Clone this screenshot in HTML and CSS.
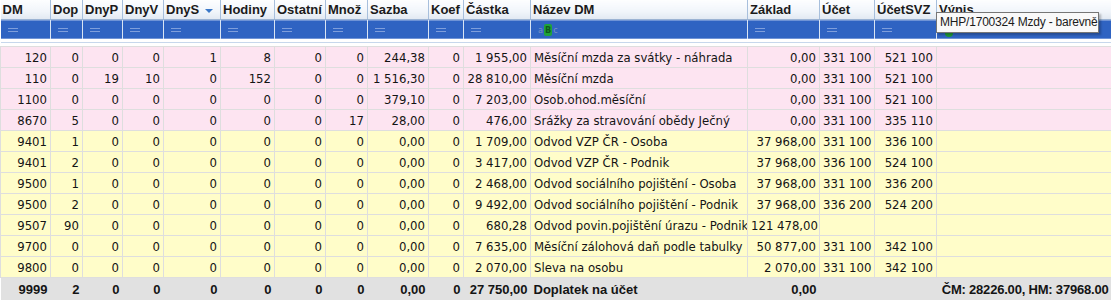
FILE: index.html
```html
<!DOCTYPE html>
<html lang="cs">

<head>
    <meta charset="UTF-8">
    <meta name="viewport" content="width=device-width, initial-scale=1.0">
    <title>Mzdy - barevně</title>
    <link rel="stylesheet" href="styles.css">
</head>

<body>
    <div class="wrap">
        <table class="grid">
            <colgroup>
                <col class="w50"><col class="w32"><col class="w40"><col class="w41">
                <col class="w57"><col class="w54"><col class="w51"><col class="w42">
                <col class="w61"><col class="w35"><col class="w67"><col class="w217">
                <col class="w72"><col class="w55"><col class="w62"><col class="w175">
            </colgroup>
            <thead>
                <tr class="head">
                    <th>DM</th><th>Dop</th><th>DnyP</th><th>DnyV</th>
                    <th>DnyS <span class="sort"></span></th><th>Hodiny</th><th>Ostatní</th><th>Množ</th>
                    <th>Sazba</th><th>Koef</th><th>Částka</th><th>Název DM</th>
                    <th>Základ</th><th>Účet</th><th>ÚčetSVZ</th><th>Výnis</th>
                </tr>
                <tr class="filter">
                    <td><span class="eq"></span></td><td><span class="eq"></span></td><td><span class="eq"></span></td><td><span class="eq"></span></td>
                    <td><span class="eq"></span></td><td><span class="eq"></span></td><td><span class="eq"></span></td><td><span class="eq"></span></td>
                    <td><span class="eq"></span></td><td><span class="eq"></span></td><td><span class="eq"></span></td>
                    <td><span class="abc"><span>a</span><b>B</b><span>c</span></span></td>
                    <td><span class="eq"></span></td><td><span class="eq"></span></td><td><span class="eq"></span></td>
                    <td><span class="dot"></span></td>
                </tr>
                <tr class="gap"><td colspan="16"></td></tr>
            </thead>
            <tbody>
                <tr class="pink">
                    <td>120</td><td>0</td><td>0</td><td>0</td><td>1</td><td>8</td><td>0</td><td>0</td>
                    <td>244,38</td><td>0</td><td>1&nbsp;955,00</td><td class="name">Měsíční mzda za svátky - náhrada</td>
                    <td>0,00</td><td>331&nbsp;100</td><td>521&nbsp;100</td><td></td>
                </tr>
                <tr class="pink">
                    <td>110</td><td>0</td><td>19</td><td>10</td><td>0</td><td>152</td><td>0</td><td>0</td>
                    <td>1&nbsp;516,30</td><td>0</td><td>28&nbsp;810,00</td><td class="name">Měsíční mzda</td>
                    <td>0,00</td><td>331&nbsp;100</td><td>521&nbsp;100</td><td></td>
                </tr>
                <tr class="pink">
                    <td>1100</td><td>0</td><td>0</td><td>0</td><td>0</td><td>0</td><td>0</td><td>0</td>
                    <td>379,10</td><td>0</td><td>7&nbsp;203,00</td><td class="name">Osob.ohod.měsíční</td>
                    <td>0,00</td><td>331&nbsp;100</td><td>521&nbsp;100</td><td></td>
                </tr>
                <tr class="pink">
                    <td>8670</td><td>5</td><td>0</td><td>0</td><td>0</td><td>0</td><td>0</td><td>17</td>
                    <td>28,00</td><td>0</td><td>476,00</td><td class="name">Srážky za stravování obědy Ječný</td>
                    <td>0,00</td><td>331&nbsp;100</td><td>335&nbsp;110</td><td></td>
                </tr>
                <tr class="yellow">
                    <td>9401</td><td>1</td><td>0</td><td>0</td><td>0</td><td>0</td><td>0</td><td>0</td>
                    <td>0,00</td><td>0</td><td>1&nbsp;709,00</td><td class="name">Odvod VZP ČR - Osoba</td>
                    <td>37&nbsp;968,00</td><td>331&nbsp;100</td><td>336&nbsp;100</td><td></td>
                </tr>
                <tr class="yellow">
                    <td>9401</td><td>2</td><td>0</td><td>0</td><td>0</td><td>0</td><td>0</td><td>0</td>
                    <td>0,00</td><td>0</td><td>3&nbsp;417,00</td><td class="name">Odvod VZP ČR - Podnik</td>
                    <td>37&nbsp;968,00</td><td>336&nbsp;100</td><td>524&nbsp;100</td><td></td>
                </tr>
                <tr class="yellow">
                    <td>9500</td><td>1</td><td>0</td><td>0</td><td>0</td><td>0</td><td>0</td><td>0</td>
                    <td>0,00</td><td>0</td><td>2&nbsp;468,00</td><td class="name">Odvod sociálního pojištění - Osoba</td>
                    <td>37&nbsp;968,00</td><td>331&nbsp;100</td><td>336&nbsp;200</td><td></td>
                </tr>
                <tr class="yellow">
                    <td>9500</td><td>2</td><td>0</td><td>0</td><td>0</td><td>0</td><td>0</td><td>0</td>
                    <td>0,00</td><td>0</td><td>9&nbsp;492,00</td><td class="name">Odvod sociálního pojištění - Podnik</td>
                    <td>37&nbsp;968,00</td><td>336&nbsp;200</td><td>524&nbsp;200</td><td></td>
                </tr>
                <tr class="yellow">
                    <td>9507</td><td>90</td><td>0</td><td>0</td><td>0</td><td>0</td><td>0</td><td>0</td>
                    <td>0,00</td><td>0</td><td>680,28</td><td class="name">Odvod povin.pojištění úrazu - Podnik</td>
                    <td>121&nbsp;478,00</td><td></td><td></td><td></td>
                </tr>
                <tr class="yellow">
                    <td>9700</td><td>0</td><td>0</td><td>0</td><td>0</td><td>0</td><td>0</td><td>0</td>
                    <td>0,00</td><td>0</td><td>7&nbsp;635,00</td><td class="name">Měsíční zálohová daň podle tabulky</td>
                    <td>50&nbsp;877,00</td><td>331&nbsp;100</td><td>342&nbsp;100</td><td></td>
                </tr>
                <tr class="yellow">
                    <td>9800</td><td>0</td><td>0</td><td>0</td><td>0</td><td>0</td><td>0</td><td>0</td>
                    <td>0,00</td><td>0</td><td>2&nbsp;070,00</td><td class="name">Sleva na osobu</td>
                    <td>2&nbsp;070,00</td><td>331&nbsp;100</td><td>342&nbsp;100</td><td></td>
                </tr>
            </tbody>
            <tfoot>
                <tr class="total">
                    <td>9999</td><td>2</td><td>0</td><td>0</td><td>0</td><td>0</td><td>0</td><td>0</td>
                    <td>0,00</td><td>0</td><td>27&nbsp;750,00</td><td class="name">Doplatek na účet</td>
                    <td>0,00</td><td></td><td></td><td class="sum">ČM: 28226.00, HM: 37968.00</td>
                </tr>
            </tfoot>
        </table>
        <div class="tooltip">MHP/1700324 Mzdy - barevně</div>
    </div>
</body>

</html>
```

FILE: styles.css
```css
body {
    margin: 0;
    background-color: #fff;
    color: #141414;
    font-family: "DejaVu Sans Condensed", "DejaVu Sans", sans-serif;
    font-stretch: condensed;
    font-size: 13px;
}

.wrap {
    position: relative;
    width: 1111px;
    height: 300px;
    overflow: hidden;
}

.grid {
    width: 1111px;
    table-layout: fixed;
    border-collapse: collapse;
}

.grid th,
.grid td {
    padding: 0 3px;
    white-space: nowrap;
    overflow: hidden;
}

/* sirky sloupcu */
.w50 { width: 50px; }
.w32 { width: 32px; }
.w40 { width: 40px; }
.w41 { width: 41px; }
.w57 { width: 57px; }
.w54 { width: 54px; }
.w51 { width: 51px; }
.w42 { width: 42px; }
.w61 { width: 61px; }
.w35 { width: 35px; }
.w67 { width: 67px; }
.w217 { width: 217px; }
.w72 { width: 72px; }
.w55 { width: 55px; }
.w62 { width: 62px; }
.w175 { width: 175px; }

/* hlavicka */
.head th {
    height: 19px;
    padding: 0 0 0 2px;
    text-align: left;
    font-family: "Liberation Sans", Arial, sans-serif;
    font-stretch: normal;
    font-weight: bold;
    color: #1b1b1b;
    background: linear-gradient(#fdfeff, #f1f5fa 60%, #e2e9f2);
    border-right: 1px solid #a7bfdc;
    border-bottom: 1px solid #9bb3d3;
}

.sort {
    display: inline-block;
    margin-left: 2px;
    vertical-align: middle;
    border-left: 4px solid transparent;
    border-right: 4px solid transparent;
    border-top: 4px solid #3b78c8;
}

/* filtr */
.filter td {
    height: 19px;
    padding: 0 0 0 7px;
    background-color: #2f63c2;
    border-right: 1px solid #d9e4f3;
    box-shadow: inset 0 2px 0 -1px #6f93d6, inset 0 -2px 0 -1px #6f93d6;
}

.eq {
    display: block;
    width: 10px;
    height: 2px;
    border-top: 1px solid #7f9edb;
    border-bottom: 1px solid #7f9edb;
}

.abc {
    display: flex;
    align-items: center;
    font-size: 9px;
    color: #7a92c4;
}

.abc b {
    margin: 0 1px;
    padding: 1px 1px;
    background-color: #1fa33a;
    color: #0d5a1c;
    border-radius: 2px;
}

.dot {
    display: block;
    width: 8px;
    height: 8px;
    margin: 6px 0 0 1px;
    border-radius: 50%;
    background-color: #1e9a35;
}

.gap td {
    height: 7px;
    padding: 0;
    background: linear-gradient(#fff 3px, #c7d7ec 3px, #c7d7ec 4px, #fff 4px);
}

/* data */
tbody td {
    height: 20px;
    padding-top: 1px;
    text-align: right;
    border: 1px solid #dedede;
}

tbody td.name {
    text-align: left;
}

.pink td {
    background-color: #fde4f1;
}

.yellow td {
    background-color: #fffdc9;
}

.total td {
    height: 23px;
    text-align: right;
    font-family: "Liberation Sans", Arial, sans-serif;
    font-stretch: normal;
    font-weight: bold;
    background-color: #e1e1e1;
    border-top: 1px solid #d2d2d2;
}

.total td.name {
    text-align: left;
}

.total td.sum {
    padding-right: 3px;
    letter-spacing: -0.2px;
}

/* bublina nad sloupcem Vynis */
.tooltip {
    position: absolute;
    left: 936px;
    top: 12px;
    width: 155px;
    padding: 2px 3px 3px 3px;
    background-color: #f9f9f9;
    border: 1px solid #767676;
    box-shadow: 2px 2px 2px rgba(0, 0, 0, 0.25);
    color: #1b1b1b;
    font-family: "Liberation Sans", Arial, sans-serif;
    font-stretch: normal;
    font-size: 12px;
    letter-spacing: -0.2px;
    white-space: nowrap;
}
```
